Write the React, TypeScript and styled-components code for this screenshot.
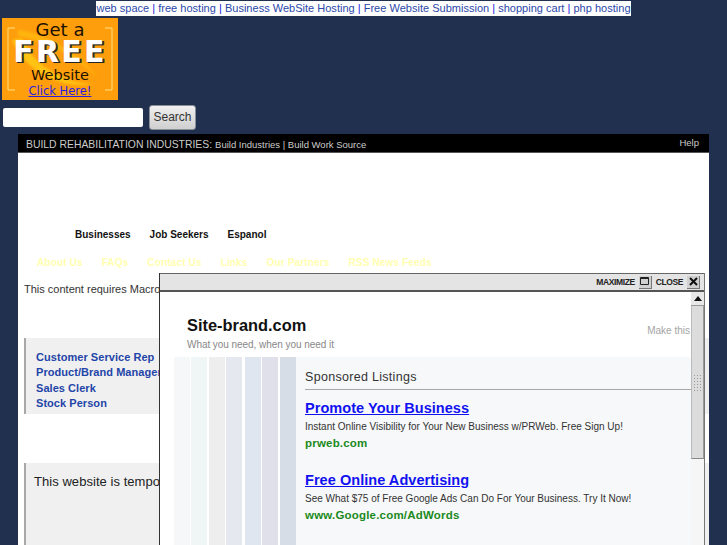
import React from 'react';
import styled, {createGlobalStyle} from "styled-components";

const Global = createGlobalStyle`
  html, body {
    margin: 0;
    height: 100%;
    overflow: hidden;
    background: #22304f;
    font-family: "Liberation Sans", Arial, sans-serif;
  }
`
const Screen = styled.div`
  position: relative;
  height: 545px;
  overflow: hidden;
`
const TopLinks = styled.div`
  display: flex;
  justify-content: center;
  padding-top: 1px;
`
const TopStrip = styled.div`
  background: #fff;
  color: #2020e0;
  font-size: 11px;
  line-height: 15px;
  white-space: nowrap;
  letter-spacing: 0.015px;
`
const TopLink = styled.a`
  color: #2a48a8;
`
const Banner = styled.div`
  position: relative;
  width: 116px;
  height: 82px;
  box-sizing: border-box;
  padding-top: 1px;
  margin: 2px 0 0 2px;
  background: #ff9e0c;
  overflow: hidden;
  display: flex;
  flex-direction: column;
  align-items: center;
  font-family: "DejaVu Sans", sans-serif;
  color: #1a1000;
`
const BannerArt = styled.svg`
  position: absolute;
  inset: 0;
`
const Swirl = styled.path`
  filter: blur(1px);
`
const BannerLine = styled.div<{$size: number; $height: number}>`
  position: relative;
  font-size: ${p => p.$size}px;
  line-height: ${p => p.$height}px;
`
const BannerFree = styled.div`
  position: relative;
  font-size: 30px;
  line-height: 23px;
  margin-bottom: 4px;
  font-weight: bold;
  color: #fff;
  letter-spacing: 2.2px;
  text-shadow: 1px 1px 0 #222, 2px 1px 0 #333;
`
const BannerClick = styled.a`
  position: relative;
  font-size: 11.5px;
  line-height: 15px;
  color: #2a1ee0;
  text-decoration: underline;
`
const SearchRow = styled.form`
  display: flex;
  align-items: center;
  gap: 6px;
  margin: 5px 0 0 3px;
  height: 25px;
`
const SearchInput = styled.div`
  width: 140px;
  height: 19px;
  background: #fff;
  border-radius: 2px;
`
const SearchButton = styled.div`
  width: 47px;
  height: 25px;
  box-sizing: border-box;
  background: linear-gradient(#f0f0f0, #cfcfcf);
  border: 1px solid #8a8f99;
  border-radius: 3px;
  color: #333;
  font-size: 12px;
  line-height: 23px;
  text-align: center;
`
const Page = styled.div`
  width: 691px;
  height: 411px;
  margin: 4px 0 0 18px;
  background: #fff;
`
const BlackBar = styled.div`
  display: flex;
  align-items: center;
  justify-content: space-between;
  height: 17px;
  padding: 0 10px 1px 8px;
  background: #000;
  border-bottom: 1px solid #555;
  color: #ccc;
`
const BarTitle = styled.span`
  font-size: 10.4px;
`
const BarLinks = styled.span`
  font-size: 9.5px;
  margin-left: 3px;
`
const BarHelp = styled.span`
  font-size: 9.5px;
`
const NavRow = styled.div`
  display: flex;
  gap: 19px;
  padding: 75px 0 0 57px;
  font-size: 10px;
  font-weight: bold;
  line-height: 14px;
  color: #111;
`
const YellowRow = styled.div`
  display: flex;
  gap: 19px;
  padding: 14px 0 0 19px;
  font-size: 10px;
  font-weight: bold;
  line-height: 14px;
  color: #ffffb0;
  letter-spacing: 0.15px;
  white-space: nowrap;
`
const FlashNote = styled.div`
  padding: 12px 0 0 6px;
  font-size: 11px;
  line-height: 15px;
  color: #333;
`
const GreyBox = styled.div<{$height: number; $top: number}>`
  box-sizing: border-box;
  height: ${p => p.$height}px;
  margin: ${p => p.$top}px 0 0 6px;
  background: #f0f0f0;
  border-left: 2px solid #a8a8a8;
`
const JobList = styled.div`
  padding-top: 12px;
  padding-left: 10px;
`
const JobLink = styled.div`
  font-size: 11px;
  font-weight: bold;
  line-height: 15.4px;
  color: #1f45a8;
  white-space: nowrap;
  letter-spacing: 0.05px;
`
const Notice = styled.div`
  padding: 11px 0 0 8px;
  font-size: 13px;
  line-height: 15px;
  color: #222;
  letter-spacing: 0.05px;
  white-space: nowrap;
`
const Modal = styled.div`
  position: absolute;
  left: 159px;
  top: 273px;
  width: 546px;
  height: 272px;
  background: #fff;
  border-left: 1px solid #333;
  border-right: 1px solid #777;
  box-sizing: border-box;
  display: flex;
  flex-direction: column;
`
const ModalBar = styled.div`
  display: flex;
  align-items: center;
  justify-content: flex-end;
  gap: 4px;
  height: 19px;
  box-sizing: border-box;
  padding-right: 4px;
  background: #e4e4e4;
  border-top: 1px solid #666;
  border-bottom: 2px solid #555;
  font-size: 8.5px;
  font-weight: bold;
  letter-spacing: -0.4px;
  color: #222;
`
const BarButton = styled.div`
  width: 13px;
  height: 13px;
  background: #d0d0d0;
  border-bottom: 1px solid #777;
  border-right: 1px solid #777;
  box-sizing: border-box;
  display: flex;
  align-items: center;
  justify-content: center;
`
const ModalBody = styled.div`
  flex: 1;
  display: flex;
  min-height: 0;
`
const ModalMain = styled.div`
  flex: 1;
  min-width: 0;
  display: flex;
  flex-direction: column;
`
const ModalHead = styled.div`
  height: 65px;
  box-sizing: border-box;
  display: flex;
  justify-content: space-between;
  padding: 23px 1px 0 27px;
`
const Brand = styled.div`
  font-size: 16.4px;
  font-weight: bold;
  line-height: 20px;
  color: #111;
`
const Tagline = styled.div`
  font-size: 10px;
  line-height: 14px;
  margin-top: 3px;
  color: #888;
  letter-spacing: -0.05px;
`
const MakeThis = styled.div`
  font-size: 10px;
  line-height: 14px;
  margin-top: 9px;
  color: #a4a4a4;
`
const ModalLower = styled.div`
  flex: 1;
  display: flex;
  margin-left: 14px;
  background: #f7f8fa;
`
const Stripes = styled.div`
  display: flex;
  width: 122px;
  background: #fff;
`
const Stripe = styled.div<{$color: string; $width: number; $gap: number}>`
  width: ${p => p.$width}px;
  margin-right: ${p => p.$gap}px;
  background: ${p => p.$color};
`
const Listings = styled.div`
  flex: 1;
  min-width: 0;
  padding: 12px 0 0 9px;
`
const ListingsTitle = styled.div`
  font-size: 12.5px;
  line-height: 16px;
  height: 20px;
  box-sizing: content-box;
  color: #333;
  letter-spacing: 0.3px;
  border-bottom: 1px solid #a8a8a8;
`
const Ad = styled.div`
  height: 71.5px;
  padding-top: 9px;
  box-sizing: border-box;
`
const AdTitle = styled.a`
  display: block;
  font-size: 14.5px;
  font-weight: bold;
  line-height: 18px;
  color: #1212f0;
  text-decoration: underline;
  letter-spacing: 0.05px;
`
const AdText = styled.div`
  font-size: 10px;
  line-height: 14px;
  margin-top: 3px;
  color: #333;
  white-space: nowrap;
`
const AdUrl = styled.div`
  font-size: 11.5px;
  font-weight: bold;
  line-height: 14px;
  margin-top: 2px;
  color: #1c8a1c;
  letter-spacing: 0.2px;
`
const Scrollbar = styled.div`
  position: relative;
  width: 13px;
  flex: none;
  background: #f6f6f6;
`
const ScrollUp = styled.div`
  height: 14px;
  box-sizing: border-box;
  background: #e8e8e8;
  border-bottom: 1px solid #999;
  display: flex;
  align-items: center;
  justify-content: center;
`
const Thumb = styled.div`
  height: 153px;
  box-sizing: border-box;
  background: #dcdcdc;
  border-bottom: 1px solid #888;
  border-left: 1px solid #bbb;
  border-right: 1px solid #999;
  display: flex;
  align-items: center;
  justify-content: center;
`
const Grip = styled.div`
  width: 10px;
  height: 17px;
  margin-top: 0;
  background-image: radial-gradient(#9a9a9a 0.6px, transparent 0.8px);
  background-size: 3px 3px;
`

const topLinks = ['web space', 'free hosting', 'Business WebSite Hosting', 'Free Website Submission', 'shopping cart', 'php hosting']
const yellowLinks = ['About Us', 'FAQs', 'Contact Us', 'Links', 'Our Partners', 'RSS News Feeds']
const jobs = ['Customer Service Rep', 'Product/Brand Manager', 'Sales Clerk', 'Stock Person']
const stripes = [
    {color: '#f5f7f9', width: 16, gap: 1},
    {color: '#eff6f5', width: 16, gap: 2},
    {color: '#eeeeee', width: 16, gap: 1},
    {color: '#e6e8f0', width: 16, gap: 3},
    {color: '#dfe6ef', width: 16, gap: 1},
    {color: '#dfe0e9', width: 16, gap: 2},
    {color: '#d6dde7', width: 16, gap: 0},
]
const ads = [
    {title: 'Promote Your Business', text: 'Instant Online Visibility for Your New Business w/PRWeb. Free Sign Up!', url: 'prweb.com'},
    {title: 'Free Online Advertising', text: 'See What $75 of Free Google Ads Can Do For Your Business. Try It Now!', url: 'www.Google.com/AdWords'},
]

const App = () => {
    return (
        <Screen>
            <Global />
            <TopLinks>
                <TopStrip>
                    {topLinks.map((link, i) => (
                        <React.Fragment key={link}>
                            {i > 0 && ' | '}
                            <TopLink>{link}</TopLink>
                        </React.Fragment>
                    ))}
                </TopStrip>
            </TopLinks>
            <Banner>
                <BannerArt width="116" height="82" viewBox="0 0 116 82">
                    <Swirl d="M10 22 C22 52 58 72 92 66 C62 66 30 46 20 20 Z" fill="#ffc313" />
                    <Swirl d="M16 12 C40 14 80 36 96 60 C76 40 44 22 16 18 Z" fill="#ffb40e" />
                    <path d="M13 10 H6 V72 H13 M103 10 H110 V72 H103" fill="none" stroke="#ffe080" strokeWidth="1" />
                </BannerArt>
                <BannerLine $size={18} $height={21}>Get a</BannerLine>
                <BannerFree>FREE</BannerFree>
                <BannerLine $size={14.5} $height={17}>Website</BannerLine>
                <BannerClick>Click Here!</BannerClick>
            </Banner>
            <SearchRow onSubmit={e => e.preventDefault()}>
                <SearchInput />
                <SearchButton>Search</SearchButton>
            </SearchRow>
            <Page>
                <BlackBar>
                    <span>
                        <BarTitle>BUILD REHABILITATION INDUSTRIES:</BarTitle>
                        <BarLinks>Build Industries | Build Work Source</BarLinks>
                    </span>
                    <BarHelp>Help</BarHelp>
                </BlackBar>
                <NavRow>
                    <span>Businesses</span>
                    <span>Job Seekers</span>
                    <span>Espanol</span>
                </NavRow>
                <YellowRow>
                    {yellowLinks.map(link => <span key={link}>{link}</span>)}
                </YellowRow>
                <FlashNote>This content requires Macromedia Flash Player</FlashNote>
                <GreyBox $height={76} $top={41}>
                    <JobList>
                        {jobs.map(job => <JobLink key={job}>{job}</JobLink>)}
                    </JobList>
                </GreyBox>
                <GreyBox $height={90} $top={49}>
                    <Notice>This website is temporarily unavailable</Notice>
                </GreyBox>
            </Page>
            <Modal>
                <ModalBar>
                    <span>MAXIMIZE</span>
                    <BarButton>
                        <svg width="9" height="9" viewBox="0 0 9 9">
                            <path d="M0.5 0.5H8.5V7.5H0.5Z M0.5 1.5H8.5" fill="none" stroke="#222" strokeWidth="1" />
                        </svg>
                    </BarButton>
                    <span>CLOSE</span>
                    <BarButton>
                        <svg width="9" height="9" viewBox="0 0 9 9">
                            <path d="M1 1L8 8M8 1L1 8" fill="none" stroke="#111" strokeWidth="2" />
                        </svg>
                    </BarButton>
                </ModalBar>
                <ModalBody>
                    <ModalMain>
                        <ModalHead>
                            <div>
                                <Brand>Site-brand.com</Brand>
                                <Tagline>What you need, when you need it</Tagline>
                            </div>
                            <MakeThis>Make this</MakeThis>
                        </ModalHead>
                        <ModalLower>
                            <Stripes>
                                {stripes.map(s => <Stripe key={s.color} $color={s.color} $width={s.width} $gap={s.gap} />)}
                            </Stripes>
                            <Listings>
                                <ListingsTitle>Sponsored Listings</ListingsTitle>
                                {ads.map(ad => (
                                    <Ad key={ad.url}>
                                        <AdTitle>{ad.title}</AdTitle>
                                        <AdText>{ad.text}</AdText>
                                        <AdUrl>{ad.url}</AdUrl>
                                    </Ad>
                                ))}
                            </Listings>
                        </ModalLower>
                    </ModalMain>
                    <Scrollbar>
                        <ScrollUp>
                            <svg width="8" height="5" viewBox="0 0 8 5"><path d="M4 0L8 5H0Z" fill="#111" /></svg>
                        </ScrollUp>
                        <Thumb><Grip /></Thumb>
                    </Scrollbar>
                </ModalBody>
            </Modal>
        </Screen>
    );
};

export default App;
